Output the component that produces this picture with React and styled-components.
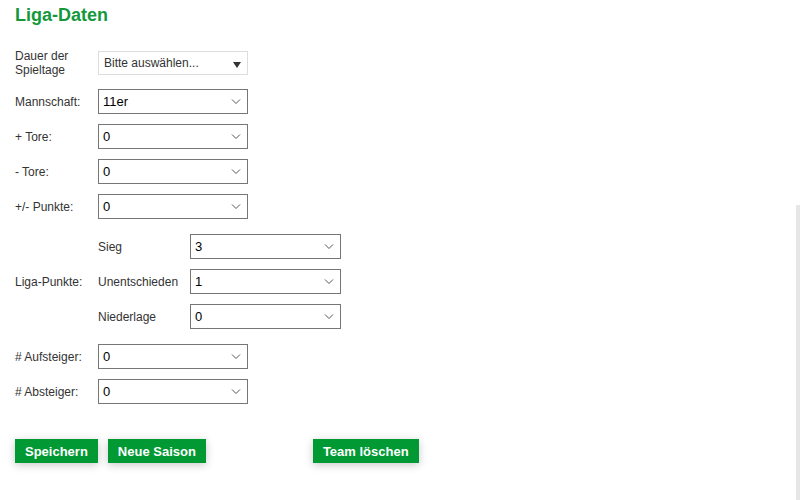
import React from "react";
import styled, { createGlobalStyle } from "styled-components";

const GlobalStyle = createGlobalStyle`
    html, body {
        margin: 0;
        padding: 0;
        background: #fff;
        font-family: Arial, "Liberation Sans", sans-serif;
        color: #333;
    }
`;

const Page = styled.div`
    position: relative;
    width: 800px;
    height: 500px;
    padding: 0 15px;
    box-sizing: border-box;
    overflow: hidden;
`;

const ScrollTrack = styled.div`
    position: absolute;
    right: 0;
    top: 205px;
    bottom: 0;
    width: 4px;
    background: #e6e6e6;
`;

const Title = styled.h2`
    margin: 0;
    padding-top: 4px;
    height: 36px;
    font-size: 18px;
    font-weight: 700;
    color: #13993a;
    line-height: 22px;
`;

const Form = styled.div`
    display: flex;
    flex-direction: column;
    padding-top: 9px;
`;

const Row = styled.div`
    display: flex;
    align-items: center;
    min-height: 25px;
    margin-bottom: ${(p) => p.$gap || 0}px;
`;

const Label = styled.label`
    width: 83px;
    flex-shrink: 0;
    font-size: 12px;
    line-height: 14px;
    color: #333;
`;

const SubLabel = styled(Label)`
    width: 92px;
`;

const Group = styled.div`
    display: flex;
    flex-direction: column;
    gap: 10px;
`;

const SelectWrap = styled.div`
    position: relative;
    width: ${(p) => p.$w || 150}px;
    height: 25px;
    svg {
        position: absolute;
        right: 7px;
        top: 10px;
        pointer-events: none;
    }
`;

const Select = styled.select`
    appearance: none;
    -webkit-appearance: none;
    box-sizing: border-box;
    width: 100%;
    height: 25px;
    margin: 0;
    padding: 0 20px 0 4px;
    border: 1px solid #767676;
    border-radius: 0;
    background: #fff;
    font-family: Arial, "Liberation Sans", sans-serif;
    font-size: 13px;
    color: #000;
    outline: none;
`;

const FakeSelect = styled.div`
    box-sizing: border-box;
    width: 150px;
    height: 24px;
    display: flex;
    align-items: center;
    justify-content: space-between;
    padding: 0 6px 0 5px;
    border: 1px solid #ddd;
    background: #fff;
    font-size: 12px;
    color: #333;
`;

const Caret = styled.span`
    width: 0;
    height: 0;
    border-left: 4.5px solid transparent;
    border-right: 4.5px solid transparent;
    border-top: 6px solid #333;
    margin-top: 3px;
`;

const Buttons = styled.div`
    display: flex;
    gap: 10px;
    margin-top: 35px;
`;

const Button = styled.button`
    height: 24px;
    padding: 0 10px;
    margin-left: ${(p) => p.$push || 0}px;
    border: none;
    border-radius: 0;
    background: #009933;
    color: #fff;
    font-family: Arial, "Liberation Sans", sans-serif;
    font-size: 13px;
    font-weight: 700;
    box-shadow: 0 2px 8px rgba(0, 0, 0, 0.22);
    cursor: pointer;
`;

function Chevron() {
    return (
        <svg width="10" height="6" viewBox="0 0 10 6">
            <path d="M1 0.5 L5 4.5 L9 0.5" fill="none" stroke="#555" strokeWidth="1" />
        </svg>
    );
}

function DropDown({ value, options, w }) {
    return (
        <SelectWrap $w={w}>
            <Select defaultValue={value}>
                {options.map((o) => (
                    <option key={o} value={o}>{o}</option>
                ))}
            </Select>
            <Chevron />
        </SelectWrap>
    );
}

const nums = ["0", "1", "2", "3", "4", "5"];

export default function App() {
    return (
        <Page>
            <GlobalStyle />
            <Title>Liga-Daten</Title>
            <Form>
                <Row $gap={12}>
                    <Label>Dauer der<br />Spieltage</Label>
                    <FakeSelect>
                        <span>Bitte auswählen...</span>
                        <Caret />
                    </FakeSelect>
                </Row>
                <Row $gap={10}>
                    <Label>Mannschaft:</Label>
                    <DropDown value="11er" options={["11er", "9er", "7er"]} />
                </Row>
                <Row $gap={10}>
                    <Label>+ Tore:</Label>
                    <DropDown value="0" options={nums} />
                </Row>
                <Row $gap={10}>
                    <Label>- Tore:</Label>
                    <DropDown value="0" options={nums} />
                </Row>
                <Row $gap={15}>
                    <Label>+/- Punkte:</Label>
                    <DropDown value="0" options={nums} />
                </Row>
                <Row $gap={15}>
                    <Label>Liga-Punkte:</Label>
                    <Group>
                        <Row>
                            <SubLabel>Sieg</SubLabel>
                            <DropDown value="3" options={nums} w={151} />
                        </Row>
                        <Row>
                            <SubLabel>Unentschieden</SubLabel>
                            <DropDown value="1" options={nums} w={151} />
                        </Row>
                        <Row>
                            <SubLabel>Niederlage</SubLabel>
                            <DropDown value="0" options={nums} w={151} />
                        </Row>
                    </Group>
                </Row>
                <Row $gap={10}>
                    <Label># Aufsteiger:</Label>
                    <DropDown value="0" options={nums} />
                </Row>
                <Row>
                    <Label># Absteiger:</Label>
                    <DropDown value="0" options={nums} />
                </Row>
            </Form>
            <Buttons>
                <Button>Speichern</Button>
                <Button>Neue Saison</Button>
                <Button $push={97}>Team löschen</Button>
            </Buttons>
            <ScrollTrack />
        </Page>
    );
}
